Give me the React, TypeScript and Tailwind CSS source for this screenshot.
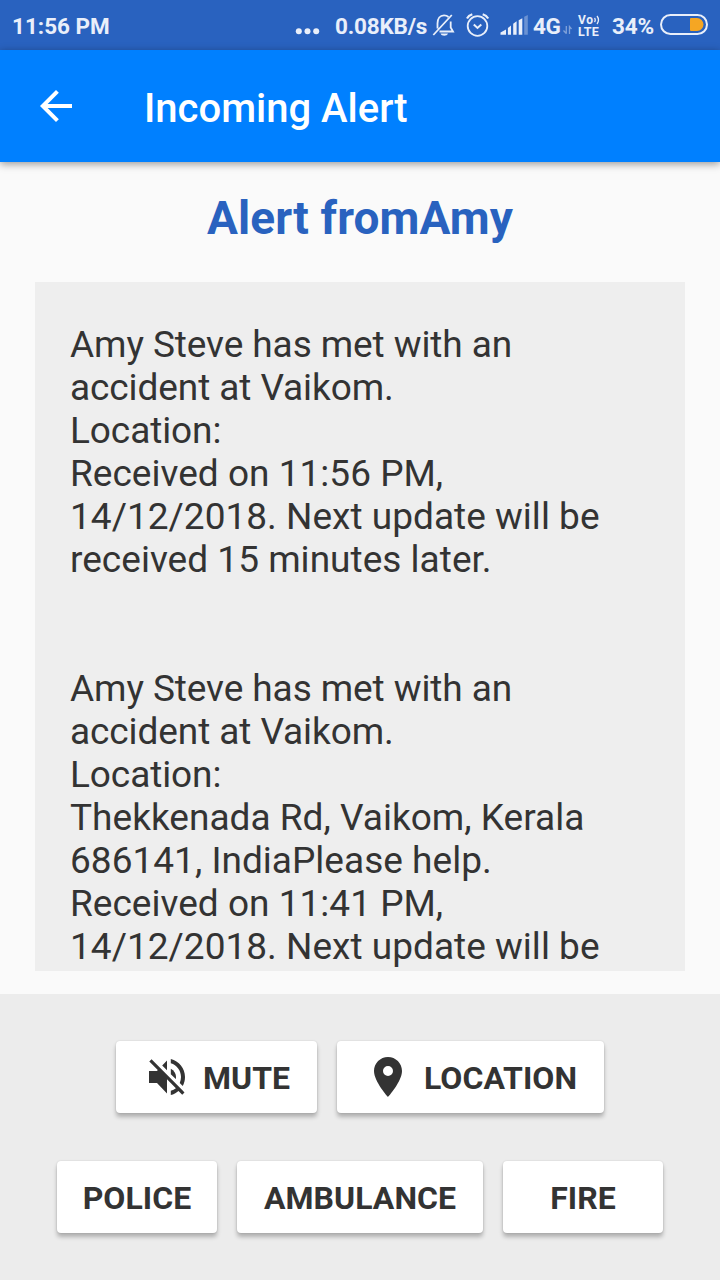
import React from "react";

const messages = [
  {
    intro: ["Amy Steve has met with an", "accident at Vaikom.", "Location:"],
    details: [
      "Received on 11:56 PM,",
      "14/12/2018. Next update will be",
      "received 15 minutes later.",
    ],
  },
  {
    intro: ["Amy Steve has met with an", "accident at Vaikom.", "Location:"],
    details: [
      "Thekkenada Rd, Vaikom, Kerala",
      "686141, IndiaPlease help.",
      "Received on 11:41 PM,",
      "14/12/2018. Next update will be",
    ],
  },
];

function StatusBar() {
  return (
    <div className="flex h-[50px] shrink-0 items-center bg-[#2962bf] text-[22.5px] leading-[46px] font-bold whitespace-nowrap text-[#e9effa]">
      <span className="w-[295px] pl-3 pt-px">11:56 PM</span>
      <svg className="w-[39px] shrink-0" height="50" viewBox="295 0 39 50" fill="currentColor">
        <circle cx="298.8" cy="31.3" r="3" />
        <circle cx="307.5" cy="31.3" r="3" />
        <circle cx="316.2" cy="31.3" r="3" />
      </svg>
      <span className="w-[96px] shrink-0 pl-px pt-px tracking-[-0.2px]">0.08KB/s</span>
      <svg className="w-[102px] shrink-0" height="50" viewBox="430 0 102 50" fill="none" stroke="currentColor" strokeWidth="1.8">
        <path d="M437.5 28.5V23.5C437.5 18.5 440 15.3 444 15.3C446 15.3 447.5 16 448.5 17M450.7 21.5V27.5L453 31.5H439.5M433.3 35L451.8 15" />
        <path d="M440.5 33.6H448C447 36.5 441.5 36.5 440.5 33.6Z" fill="currentColor" stroke="none" />
        <circle cx="477.5" cy="26" r="9.8" />
        <path d="M473.8 24.5L477.5 28L481.3 24.5" strokeWidth="2" />
        <path d="M467 18.5Q468.5 15.5 472.3 14.3M482.7 14.3Q486.5 15.5 488.2 18.5" strokeWidth="2.2" />
        <g fill="currentColor" stroke="none">
          <path d="M500.5 34.7V32.5L506 29.5V34.7Z" />
          <path d="M507.9 34.7V28L511 25.5V34.7Z" />
          <path d="M513.2 34.7V23.7L516.6 21.2V34.7Z" />
          <path d="M518.7 34.7V20.3L522.3 18.2V34.7Z" />
          <path d="M524.2 34.7V16.7L527.8 15V34.7Z" opacity=".35" />
        </g>
      </svg>
      <span className="w-[30px] shrink-0 pl-px pt-px tracking-[-0.4px]">4G</span>
      <svg className="w-[16px] shrink-0" height="50" viewBox="562 0 16 50" fill="none" stroke="currentColor" strokeWidth="1.3" opacity=".45">
        <path d="M566.3 26V33.8M563.5 30.5L566.3 33.5M569.5 34V26.5L571.5 29" />
      </svg>
      <div className="flex w-[34px] shrink-0 flex-col pt-px">
        <div className="flex h-[12px] items-center">
          <span className="text-[12px] leading-[12px] tracking-[0.6px]">Vo</span>
          <svg width="8" height="10" viewBox="0 0 8 10" fill="none" stroke="currentColor" strokeWidth="1.3">
            <path d="M0.5 3Q2 5 0.5 7M3 1Q6 5 3 9" />
          </svg>
        </div>
        <span className="text-[12.5px] leading-[12px] tracking-[0.3px]">LTE</span>
      </div>
      <span className="w-[48px] shrink-0 pt-px tracking-[-0.2px]">34%</span>
      <svg className="w-[60px] shrink-0" height="50" viewBox="660 0 60 50">
        <rect x="661" y="15" width="46" height="19" rx="9.5" fill="none" stroke="currentColor" strokeWidth="2" />
        <path d="M691 18H697A6.5 6.5 0 0 1 697 31H691Q690 31 690 30V19Q690 18 691 18Z" fill="#f5a623" />
      </svg>
    </div>
  );
}

function ActionButton({ label, className, icon }: { label: string; className: string; icon?: React.ReactNode }) {
  return (
    <button
      className={
        "flex h-[72px] items-center rounded-[4px] bg-white text-[32px] leading-[72px] font-bold text-[#333] shadow-[0_4px_4px_rgba(0,0,0,0.25),0_0_2px_rgba(0,0,0,0.14)] " +
        className
      }
    >
      {icon}
      <span className="pt-px tracking-[0.05px]">{label}</span>
    </button>
  );
}

export default function App() {
  return (
    <div className="flex h-[1280px] w-[720px] flex-col overflow-hidden bg-[#fafafa] font-['Roboto',sans-serif]">
      <StatusBar />
      <header className="flex h-[112px] shrink-0 items-center bg-[#0080ff] pl-8 text-white shadow-[0_2px_8px_rgba(0,0,0,0.4)]">
        <svg width="48" height="48" viewBox="0 0 24 24" fill="currentColor">
          <path d="M20 11H7.83l5.59-5.59L12 4l-8 8 8 8 1.41-1.41L7.83 13H20v-2z" />
        </svg>
        <h1 className="pt-1.5 pl-16 text-[40px] leading-[48px] font-medium">Incoming Alert</h1>
      </header>
      <h2 className="h-[120px] shrink-0 pt-[29px] text-center text-[46px] leading-[54px] font-bold tracking-[0.12px] text-[#2962bf]">Alert fromAmy</h2>
      <main className="mx-[35px] h-[689px] shrink-0 overflow-hidden bg-[#eee] px-[35px] pt-[41px] text-[37px] leading-[43px] whitespace-nowrap text-[#333]">
        {messages.map(({ intro, details }, i) => (
          <div key={i} className="mb-[86px]">
            {intro.map((line) => (
              <p key={line} className="tracking-[-0.09px]">{line}</p>
            ))}
            {details.map((line) => (
              <p key={line} className="tracking-[0.02px]">{line}</p>
            ))}
          </div>
        ))}
      </main>
      <footer className="mt-[23px] flex flex-1 flex-col items-center gap-12 bg-[#ececec] pt-[47px]">
        <div className="flex gap-5">
          <ActionButton
            label="MUTE"
            className="w-[201px] pl-[27px]"
            icon={
              <svg className="mr-3 shrink-0" width="48" height="48" viewBox="0 0 512 512" fill="currentColor">
                <path d="M405.5 256c0 22.717-4.883 44.362-13.603 63.855l31.88 31.88C439.283 323.33 448 290.653 448 256c0-93.256-64.794-171.254-151.5-192v44.978C361.913 129.106 405.5 187.5 405.5 256z" />
                <path d="M256 80.458l-51.021 52.48L256 183.957zM420.842 396.885L91.116 67.157l-24 24 90.499 90.413-8.28 10.43H64v128h85.334L256 431.543V280l94.915 94.686C335.795 387.443 318 397.213 296.5 403.022V448c31-7.172 58.996-22.163 82.315-42.809l39.61 39.693 24-24.043z" />
                <path d="M352.188 256c0-38.399-21.407-72.863-55.688-88.863v59.82l53.301 50.801A100.596 100.596 0 0 0 352.188 256z" />
              </svg>
            }
          />
          <ActionButton
            label="LOCATION"
            className="w-[267px] pl-[27px]"
            icon={
              <svg className="mr-3 shrink-0" width="48" height="48" viewBox="0 0 24 24" fill="currentColor">
                <path d="M12 2C8.13 2 5 5.13 5 9c0 5.25 7 13 7 13s7-7.75 7-13c0-3.87-3.13-7-7-7zm0 9.5a2.5 2.5 0 0 1 0-5 2.5 2.5 0 0 1 0 5z" />
              </svg>
            }
          />
        </div>
        <div className="flex gap-5">
          <ActionButton label="POLICE" className="w-[160px] justify-center" />
          <ActionButton label="AMBULANCE" className="w-[246px] justify-center" />
          <ActionButton label="FIRE" className="w-[160px] justify-center" />
        </div>
      </footer>
    </div>
  );
}
